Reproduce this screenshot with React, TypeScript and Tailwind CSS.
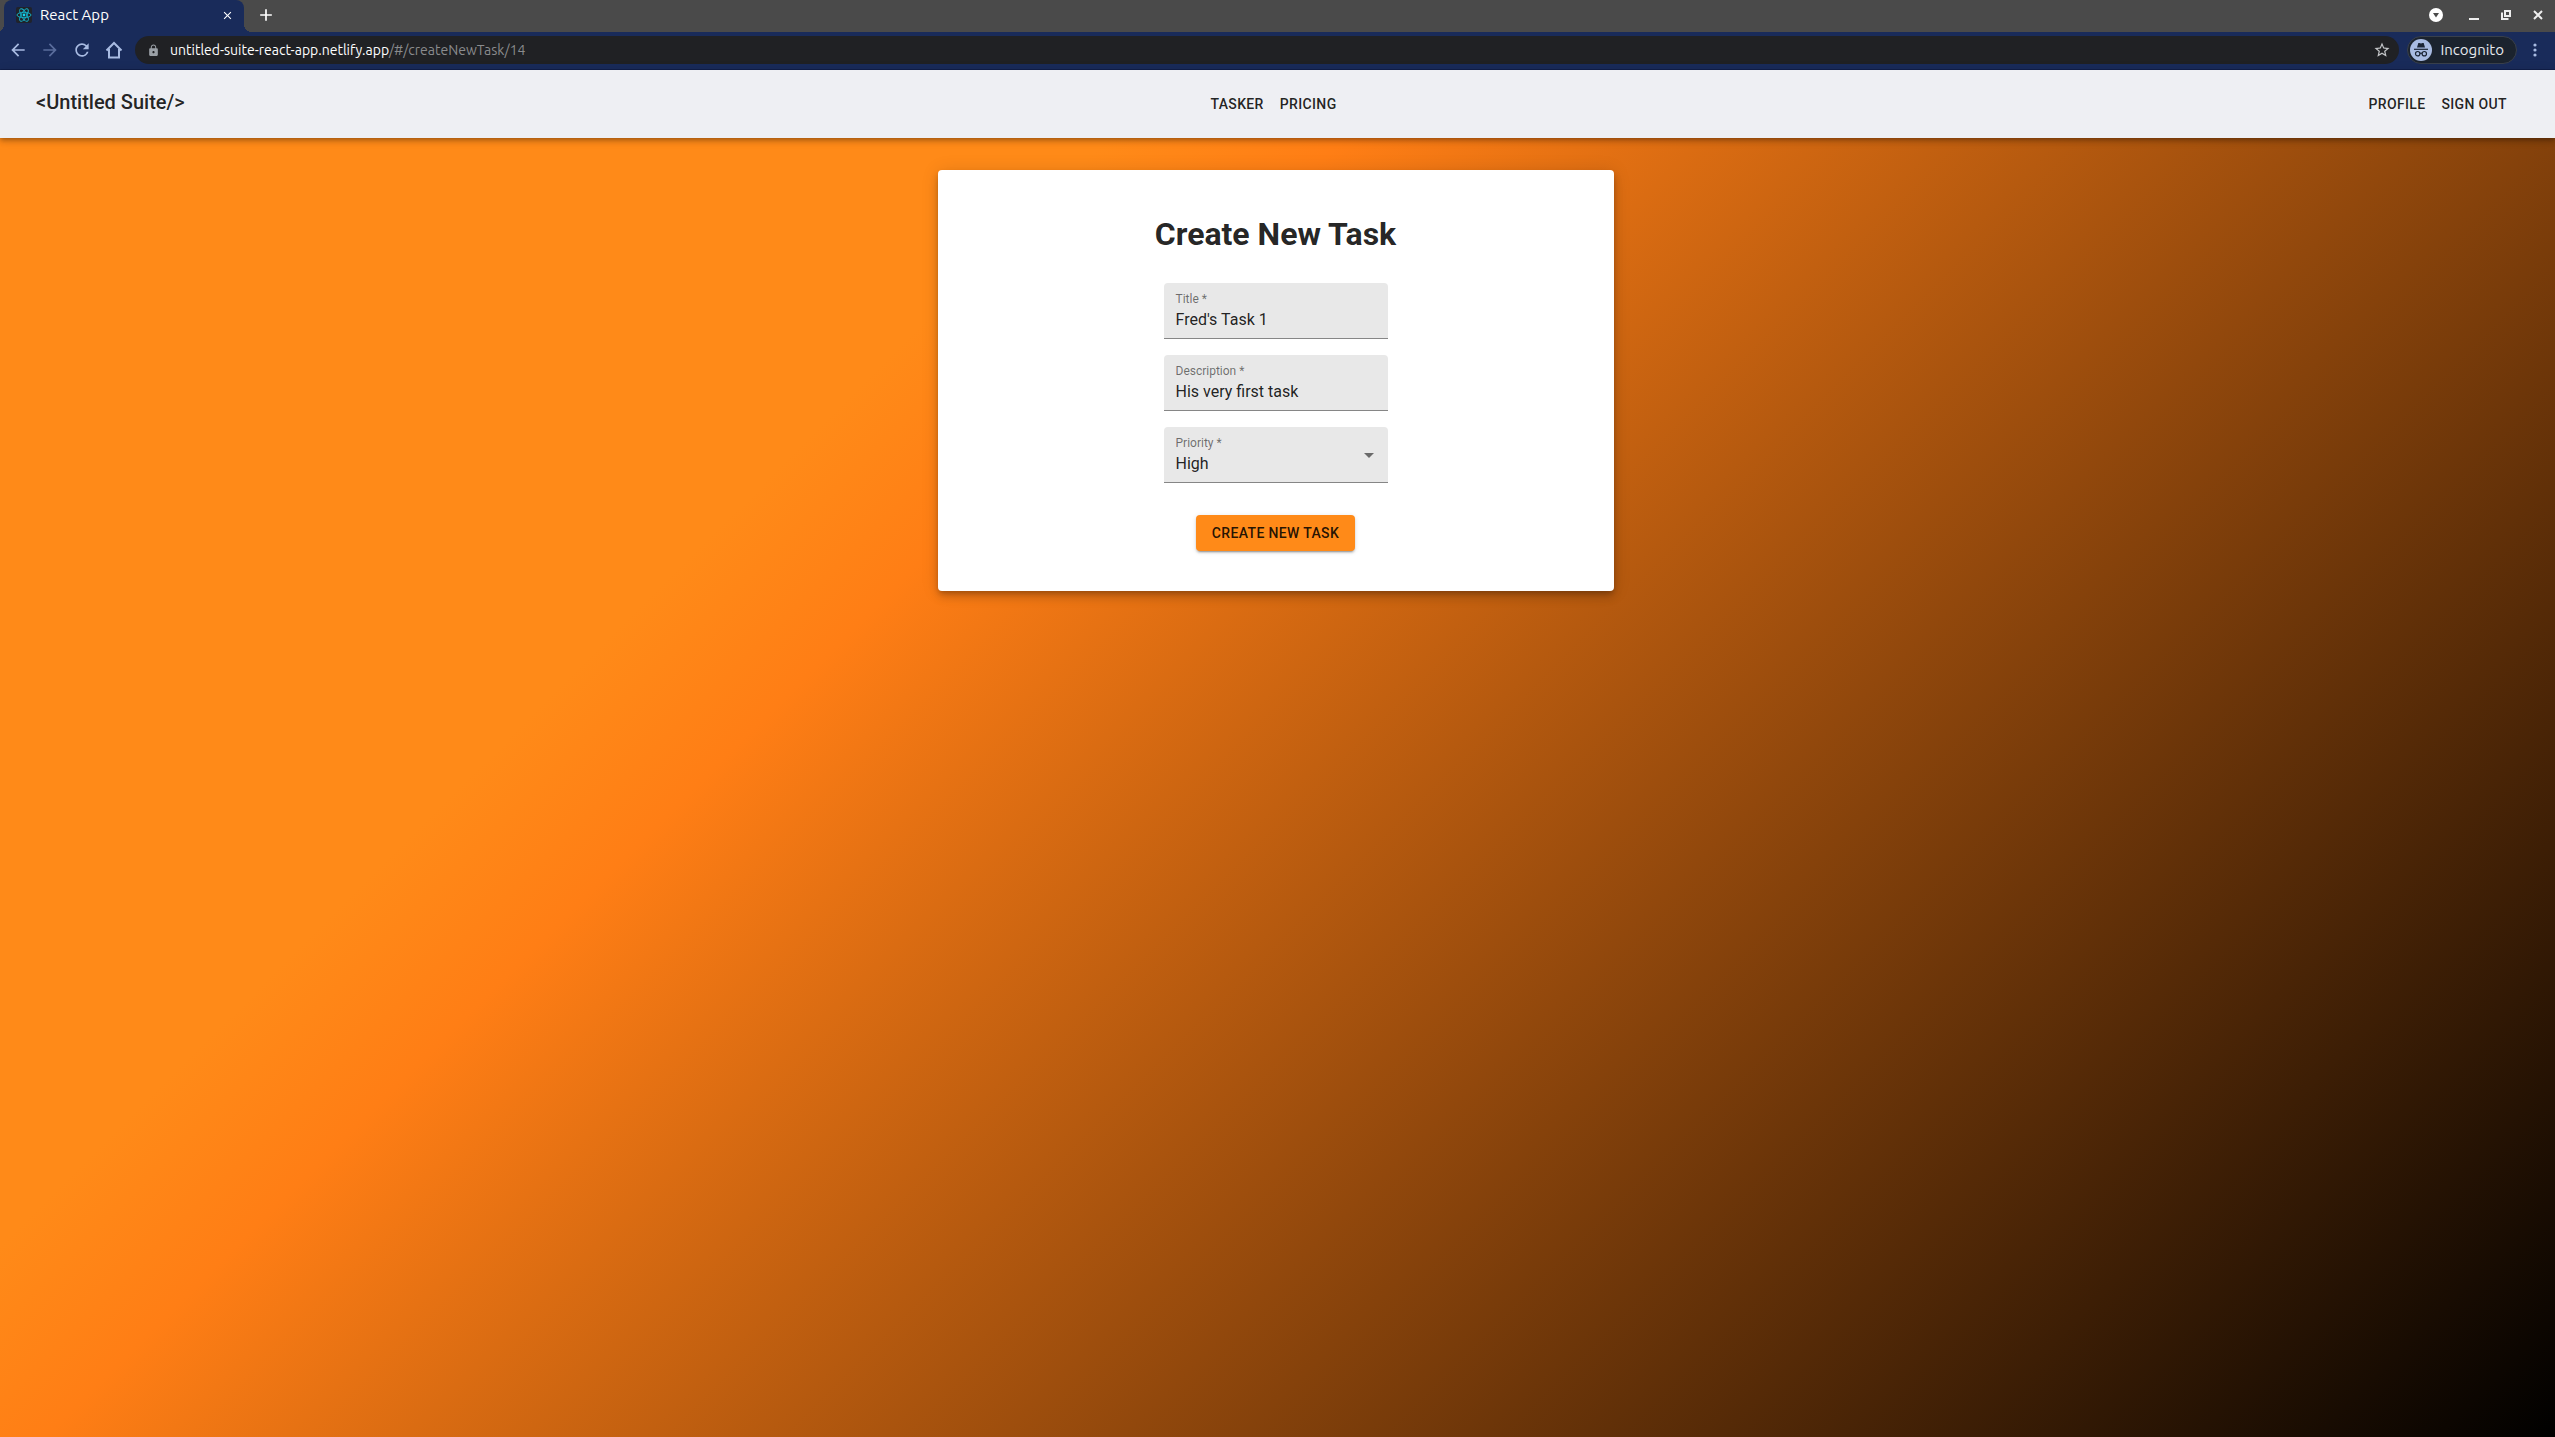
import type { ReactNode } from "react";
import { MdLock, MdStarBorder, MdRefresh, MdArrowBack, MdArrowForward, MdArrowDropDown, MdClose, MdAdd } from "react-icons/md";

const field =
  "w-full rounded-t border-b border-[#868686] bg-[#e8e8e8] px-3 pb-1.5 h-14 text-base leading-6 text-black/87 outline-none appearance-none";

function Field({ id, label, children }: { id: string; label: string; children: ReactNode }) {
  return (
    <div className="relative w-56">
      <label htmlFor={id} className="absolute top-2 left-3 text-xs leading-4 text-black/54">
        {label}
      </label>
      {children}
    </div>
  );
}

function ReactLogo() {
  return (
    <svg width="16" height="16" viewBox="0 0 32 32" className="rounded-xs bg-[#20232a]" aria-hidden="true">
      <g fill="none" stroke="#14b4cc" strokeWidth="1.8">
        <ellipse cx="16" cy="16" rx="14" ry="5.400" />
        <ellipse cx="16" cy="16" rx="14" ry="5.400" transform="rotate(60 16 16)" />
        <ellipse cx="16" cy="16" rx="14" ry="5.400" transform="rotate(120 16 16)" />
      </g>
      <circle cx="16" cy="16" r="2.800" fill="#14d4ee" />
    </svg>
  );
}

function HomeIcon() {
  return (
    <svg width="18" height="18" viewBox="0 0 18 18" fill="none" stroke="currentColor" strokeWidth="2" aria-hidden="true">
      <path d="M1.500 9.500 9 2l7.500 7.500M4 8v8.500h10V8" />
    </svg>
  );
}

function IncognitoIcon() {
  return (
    <svg width="22" height="22" viewBox="0 0 22 22" aria-hidden="true">
      <circle cx="11" cy="11" r="11" fill="#a8bbe2" />
      <path d="M8.300 4h1.200l1.500.5 1.500-.5h1.200L15 8.500H7z" fill="#1b2536" />
      <path d="M4 9.700h14v1.200H4z" fill="#1b2536" />
      <g fill="none" stroke="#1b2536" strokeWidth="1.200">
        <circle cx="7.700" cy="14.700" r="2.200" />
        <circle cx="14.300" cy="14.700" r="2.200" />
        <path d="M9.900 14.500q1.100-.8 2.200 0" />
      </g>
    </svg>
  );
}

function BrowserChrome() {
  return (
    <header className="font-['Ubuntu','Noto_Sans',sans-serif] text-white">
      <div className="flex h-8 items-stretch bg-[#4a4a4a]">
        <div className="relative ml-1 flex w-60 items-center rounded-t-lg bg-[#192b5a] pr-1.5 pb-0.5 pl-3 text-[15px]">
          <span className="absolute bottom-0 -left-2 size-2 bg-[radial-gradient(circle_at_top_left,transparent_8px,#192b5a_8px)]" />
          <span className="absolute -right-2 bottom-0 size-2 bg-[radial-gradient(circle_at_top_right,transparent_8px,#192b5a_8px)]" />
          <ReactLogo />
          <span className="ml-2 flex-1 leading-5">React App</span>
          <button aria-label="Close tab" className="p-1">
            <MdClose size={13} />
          </button>
        </div>
        <button aria-label="New tab" className="ml-2 flex items-center px-1 pb-0.5">
          <MdAdd size={20} />
        </button>
        <div className="ml-auto flex items-center gap-[22px] pr-3 pb-0.5">
          <button aria-label="Search tabs" className="mr-1 flex size-[14px] items-center justify-center rounded-full bg-white text-[#4a4a4a]">
            <svg width="14" height="14" viewBox="0 0 14 14" fill="currentColor" aria-hidden="true">
              <path d="M4 5h6L7 9.500z" />
            </svg>
          </button>
          <button aria-label="Minimize">
            <svg width="10" height="10" aria-hidden="true">
              <path d="M0 8h10v2H0z" fill="#eee" />
            </svg>
          </button>
          <button aria-label="Restore">
            <svg width="10" height="10" fill="none" stroke="#eee" strokeWidth="2" aria-hidden="true">
              <path d="M4 1h5v5H4zM1 2.500V9h6.500" />
            </svg>
          </button>
          <button aria-label="Close">
            <svg width="10" height="10" fill="none" stroke="#eee" strokeWidth="2" aria-hidden="true">
              <path d="M1 1l8 8M9 1 1 9" />
            </svg>
          </button>
        </div>
      </div>
      <div className="flex h-[38px] items-center border-b border-[#12204a] bg-[#192b5a] px-2 pb-px text-[#a8bbe2]">
        <div className="flex items-center gap-3">
          <button aria-label="Back">
            <MdArrowBack size={20} />
          </button>
          <button aria-label="Forward" className="text-[#5a6d9c]">
            <MdArrowForward size={20} />
          </button>
          <button aria-label="Reload">
            <MdRefresh size={20} />
          </button>
          <button aria-label="Home" className="pl-px">
            <HomeIcon />
          </button>
        </div>
        <div className="ml-3 flex h-7 flex-1 items-center rounded-full bg-[#202124] pr-2 pl-3 text-[14px] leading-5">
          <MdLock size={13} className="text-[#9aa0a6]" />
          <a href="#/createNewTask/14" className="ml-2.5 flex-1 text-[#8a8b8d]">
            <span className="text-white">untitled-suite-react-app.netlify.app</span>/#/createNewTask/14
          </a>
          <button aria-label="Bookmark this page" className="text-[#c4c6c9]">
            <MdStarBorder size={18} />
          </button>
        </div>
        <div className="ml-2 flex h-7 items-center gap-2 rounded-full border border-[#39404b] bg-[#1b232e] pr-3 pl-0.5 text-[15px] leading-5 text-[#e6e9ee]">
          <IncognitoIcon />
          Incognito
        </div>
        <button aria-label="Menu" className="ml-4 pr-2.5">
          <svg width="4" height="14" viewBox="0 0 4 14" fill="currentColor" aria-hidden="true">
            <circle cx="2" cy="2" r="1.600" />
            <circle cx="2" cy="7" r="1.600" />
            <circle cx="2" cy="12" r="1.600" />
          </svg>
        </button>
      </div>
    </header>
  );
}

function NavBar() {
  return (
    <nav className="relative z-10 grid h-[68px] grid-cols-[1fr_auto_1fr] items-center bg-[#eeeff3] pr-11 pl-9 text-black/87 shadow-[0_2px_4px_-1px_rgba(0,0,0,0.2),0_4px_5px_0_rgba(0,0,0,0.14),0_1px_10px_0_rgba(0,0,0,0.12)]">
      <a href="#/" className="pb-1 text-xl leading-8 font-medium">
        &lt;Untitled Suite/&gt;
      </a>
      <div className="flex gap-4 text-sm font-medium tracking-wide">
        <a href="#/tasker">TASKER</a>
        <a href="#/pricing">PRICING</a>
      </div>
      <div className="flex justify-end gap-4 pr-1 text-sm font-medium tracking-wide">
        <a href="#/profile">PROFILE</a>
        <a href="#/signout">SIGN OUT</a>
      </div>
    </nav>
  );
}

export default function App() {
  return (
    <div className="flex min-h-screen flex-col font-['Roboto',sans-serif]">
      <BrowserChrome />
      <div className="flex flex-1 flex-col bg-[linear-gradient(135deg,#ff8a18_0%,#ff8a18_30%,#ff7e15_36%,#000_100%)]">
        <NavBar />
        <main className="flex flex-1 flex-col items-center pt-8 pr-1">
          <form className="flex w-full max-w-[676px] flex-col items-center rounded bg-white pt-10 pb-10 shadow-[0_3px_5px_-1px_rgba(0,0,0,0.2),0_6px_10px_0_rgba(0,0,0,0.14),0_1px_18px_0_rgba(0,0,0,0.12)]">
            <h1 className="text-[32px] leading-12 font-bold text-black/87">Create New Task</h1>
            <div className="mt-[25px] flex flex-col gap-4">
              <Field id="title" label="Title *">
                <input id="title" className={`${field} pt-6`} defaultValue="Fred's Task 1" />
              </Field>
              <Field id="description" label="Description *">
                <input id="description" className={`${field} pt-6`} defaultValue="His very first task" />
              </Field>
              <Field id="priority" label="Priority *">
                <select id="priority" className={`${field} pt-[25px]`} defaultValue="High">
                  <option>High</option>
                  <option>Medium</option>
                  <option>Low</option>
                </select>
                <MdArrowDropDown size={24} className="pointer-events-none absolute top-4 right-[7px] text-black/54" />
              </Field>
            </div>
            <button
              type="button"
              className="mt-8 rounded bg-[#ff8a18] px-4 py-1.5 text-sm leading-6 font-medium tracking-wide text-black/87 shadow-[0_3px_1px_-2px_rgba(0,0,0,0.2),0_2px_2px_0_rgba(0,0,0,0.14),0_1px_5px_0_rgba(0,0,0,0.12)]"
            >
              CREATE NEW TASK
            </button>
          </form>
        </main>
      </div>
    </div>
  );
}
